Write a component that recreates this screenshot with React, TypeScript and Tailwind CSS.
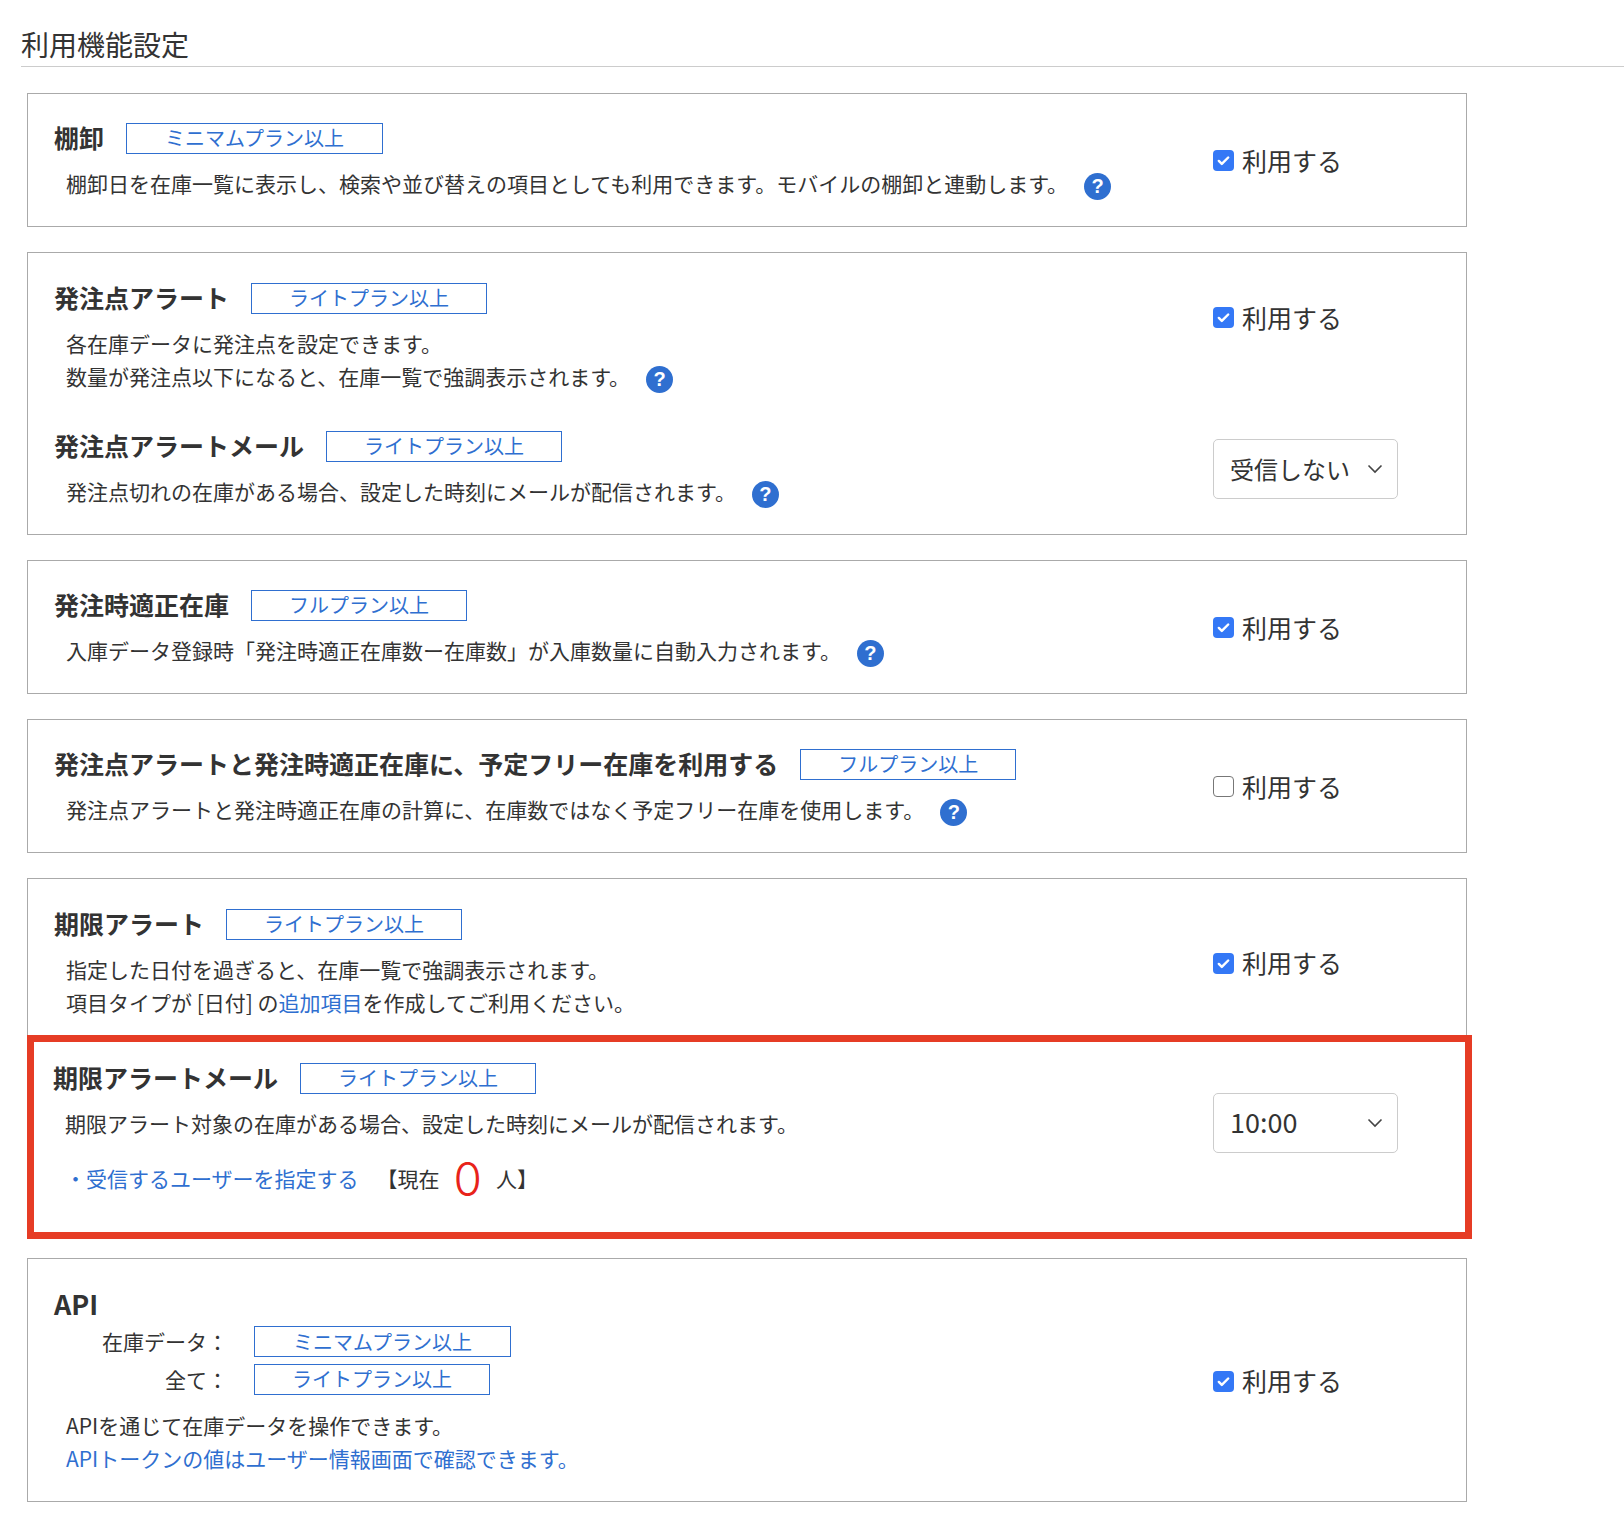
import React from "react";

const F = { fontFamily: '"Noto Sans CJK JP", "Noto Sans", sans-serif' };

function Badge({ children, w = "w-[257px]" }: { children: React.ReactNode; w?: string }) {
  return (
    <span className="inline-flex items-center justify-center h-[31px] border border-[#2f6fd0] text-[#2f6fd0] text-[20px] leading-none shrink-0" style={{ width: w === "w-[257px]" ? 257 : w === "w-[236px]" ? 236 : 216 }}>
      {children}
    </span>
  );
}

function Q() {
  return (
    <span className="inline-flex items-center justify-center w-[27px] h-[27px] rounded-full bg-[#2f6fd0] text-white text-[20px] font-bold leading-none ml-[16px] align-middle" style={{ fontFamily: '"Liberation Sans", sans-serif' }}>
      ?
    </span>
  );
}

function Check({ on = true }: { on?: boolean }) {
  return (
    <div className="flex items-center gap-[8px]">
      {on ? (
        <span className="w-[21px] h-[21px] rounded-[4px] bg-[#3478f6] flex items-center justify-center">
          <svg width="15" height="15" viewBox="0 0 16 16"><path d="M3 8.5l3.2 3.2L13 4.8" stroke="white" strokeWidth="2.6" fill="none" strokeLinecap="round" strokeLinejoin="round" /></svg>
        </span>
      ) : (
        <span className="w-[21px] h-[21px] rounded-[4px] border-[1.5px] border-[#777] bg-white" />
      )}
      <span className="text-[25px] text-[#333]">利用する</span>
    </div>
  );
}

function Select({ label, big }: { label: string; big?: boolean }) {
  return (
    <div className="w-[185px] h-[60px] border border-[#ccc] rounded-[5px] flex items-center justify-between pl-[16px] pr-[14px]">
      <span className={`${big ? "text-[27px]" : "text-[24px]"} text-[#333]`}>{label}</span>
      <svg width="16" height="10" viewBox="0 0 16 10"><path d="M1.5 1.5l6.5 6.5 6.5-6.5" stroke="#444" strokeWidth="1.6" fill="none" /></svg>
    </div>
  );
}

function Head({ title, badge, bw }: { title: string; badge: string; bw?: string }) {
  return (
    <div className="flex items-center gap-[22px] h-[34px]">
      <span className="text-[25px] font-bold text-[#333] whitespace-nowrap">{title}</span>
      <Badge w={bw}>{badge}</Badge>
    </div>
  );
}

function Desc({ children }: { children: React.ReactNode }) {
  return <div className="pl-[12px] text-[21px] leading-[33px] text-[#333]">{children}</div>;
}

function Row({ left, right }: { left: React.ReactNode; right: React.ReactNode }) {
  return (
    <div className="flex items-center">
      <div className="flex-1 flex flex-col gap-[12px]">{left}</div>
      <div className="w-[253px] shrink-0">{right}</div>
    </div>
  );
}

const card = "w-[1440px] border border-[#aaa] pl-[26px]";

export default function App() {
  return (
    <div className="bg-white min-h-[1524px] pt-[26px]" style={F}>
      <div className="ml-[21px] border-b border-[#ccc] pb-[4px]">
        <div className="text-[28px] text-[#333] leading-[36px]">利用機能設定</div>
      </div>
      <div className="ml-[27px] mt-[26px] flex flex-col gap-[25px]">
        <div className={`${card} pt-[27px] pb-[26px]`}>
          <Row
            left={<><Head title="棚卸" badge="ミニマムプラン以上" /><Desc>棚卸日を在庫一覧に表示し、検索や並び替えの項目としても利用できます。モバイルの棚卸と連動します。<Q /></Desc></>}
            right={<Check />}
          />
        </div>

        <div className={`${card} pt-[28px] pb-[26px] flex flex-col gap-[36px]`}>
          <Row
            left={<><Head title="発注点アラート" badge="ライトプラン以上" bw="w-[236px]" /><Desc>各在庫データに発注点を設定できます。<br />数量が発注点以下になると、在庫一覧で強調表示されます。<Q /></Desc></>}
            right={<div className="-mt-[38px]"><Check /></div>}
          />
          <Row
            left={<><Head title="発注点アラートメール" badge="ライトプラン以上" bw="w-[236px]" /><Desc>発注点切れの在庫がある場合、設定した時刻にメールが配信されます。<Q /></Desc></>}
            right={<Select label="受信しない" />}
          />
        </div>

        <div className={`${card} pt-[27px] pb-[26px]`}>
          <Row
            left={<><Head title="発注時適正在庫" badge="フルプラン以上" bw="w-[216px]" /><Desc>入庫データ登録時「発注時適正在庫数ー在庫数」が入庫数量に自動入力されます。<Q /></Desc></>}
            right={<Check />}
          />
        </div>

        <div className={`${card} pt-[27px] pb-[26px]`}>
          <Row
            left={<><Head title="発注点アラートと発注時適正在庫に、予定フリー在庫を利用する" badge="フルプラン以上" bw="w-[216px]" /><Desc>発注点アラートと発注時適正在庫の計算に、在庫数ではなく予定フリー在庫を使用します。<Q /></Desc></>}
            right={<Check on={false} />}
          />
        </div>

        <div className="flex flex-col">
          <div className="w-[1440px] border border-b-0 border-[#aaa] pl-[26px] pt-[28px] pb-[16px]">
            <Row
              left={<><Head title="期限アラート" badge="ライトプラン以上" bw="w-[236px]" /><Desc>指定した日付を過ぎると、在庫一覧で強調表示されます。<br />項目タイプが [日付] の<span className="text-[#2f6fd0]">追加項目</span>を作成してご利用ください。</Desc></>}
              right={<Check />}
            />
          </div>
          <div className="w-[1445px] border-[7px] border-[#e63c25] pl-[19px] pr-[67px] pt-[19px] pb-[30px]">
            <div className="flex items-center">
              <div className="flex-1 flex flex-col gap-[12px]">
                <Head title="期限アラートメール" badge="ライトプラン以上" bw="w-[236px]" />
                <Desc>期限アラート対象の在庫がある場合、設定した時刻にメールが配信されます。</Desc>
                <div className="pl-[12px] mt-[4px] flex items-center text-[21px] text-[#333] h-[46px]">
                  <span className="text-[#2f6fd0]">・受信するユーザーを指定する</span>
                  <span className="ml-[18px]">【現在</span>
                  <span className="text-[#e8231a] text-[46px] leading-none mx-[14px] font-light" style={{ fontFamily: 'Inter, "Liberation Sans", sans-serif' }}>0</span>
                  <span>人】</span>
                </div>
              </div>
              <div className="w-[185px] shrink-0 -mt-[18px]"><Select label="10:00" big /></div>
            </div>
          </div>
        </div>

        <div className={`${card} -mt-[6px] pt-[28px] pb-[26px]`}>
          <Row
            left={
              <div className="flex flex-col">
                <div className="text-[27px] font-bold text-[#333] leading-[34px]">API</div>
                <div className="grid grid-cols-[200px_auto] gap-y-[6px] items-center mt-[5px] w-fit">
                  <span className="text-right pr-[26px] text-[21px] text-[#333]">在庫データ：</span>
                  <Badge>ミニマムプラン以上</Badge>
                  <span className="text-right pr-[26px] text-[21px] text-[#333]">全て：</span>
                  <Badge w="w-[236px]">ライトプラン以上</Badge>
                </div>
                <div className="pl-[12px] mt-[14px] text-[21px] leading-[33px] text-[#333]">APIを通じて在庫データを操作できます。</div>
                <div className="pl-[12px] text-[21px] leading-[33px] text-[#2f6fd0]">APIトークンの値はユーザー情報画面で確認できます。</div>
              </div>
            }
            right={<Check />}
          />
        </div>
      </div>
    </div>
  );
}
